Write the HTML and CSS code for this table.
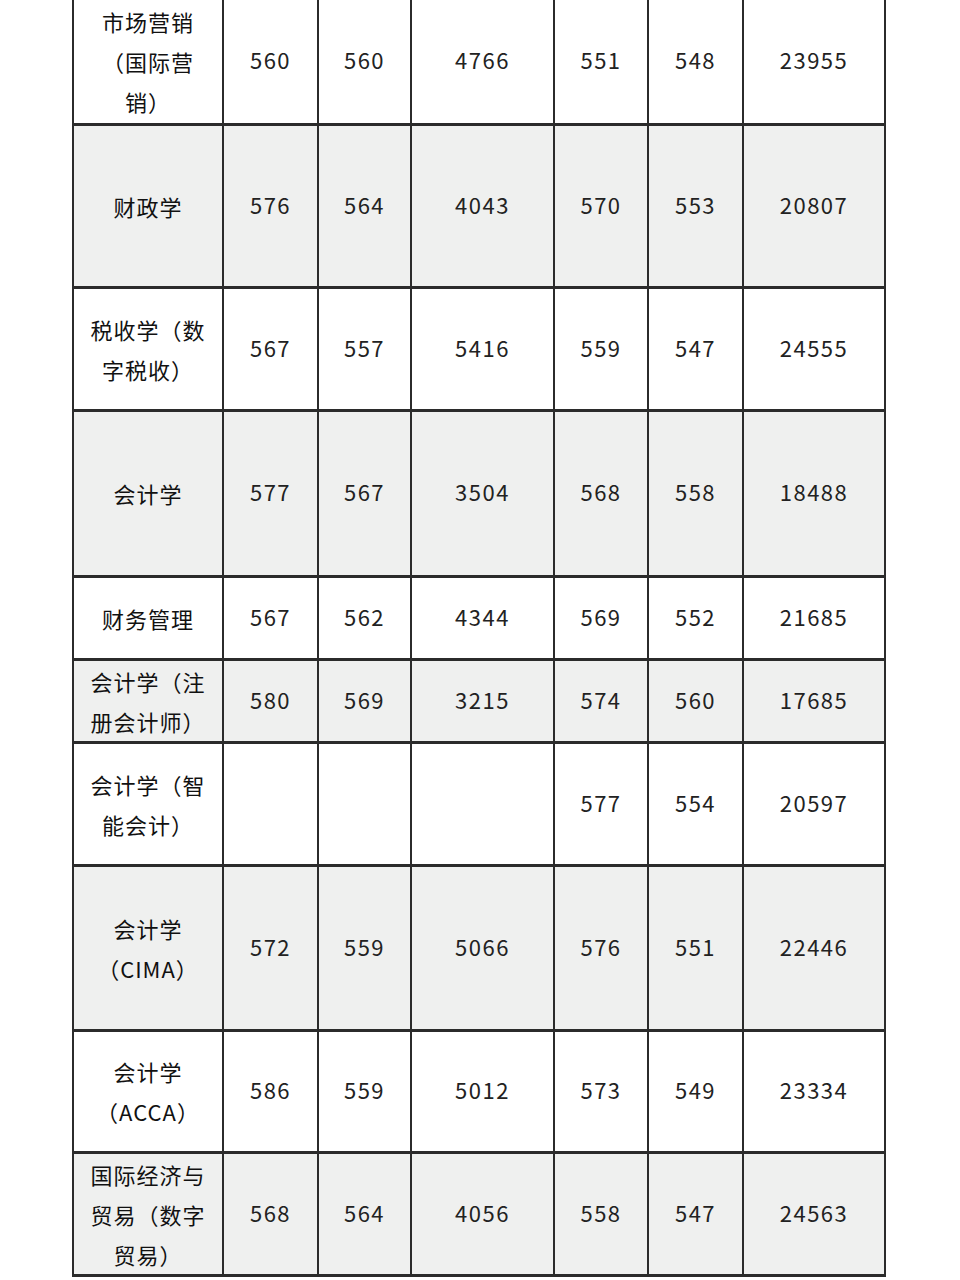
FILE: index.html
```html
<!DOCTYPE html>
<html lang="zh-CN">
<head>
<meta charset="utf-8">
<link rel="stylesheet" href="styles.css">
</head>
<body>
<table class="scores">
  <colgroup>
    <col class="c-name"><col class="c-a"><col class="c-b"><col class="c-c"><col class="c-d"><col class="c-e"><col class="c-f">
  </colgroup>
  <tbody>
    <tr class="r1"><td class="name">市场营销（国际营销）</td><td>560</td><td>560</td><td>4766</td><td>551</td><td>548</td><td>23955</td></tr>
    <tr class="r2 shade"><td class="name">财政学</td><td>576</td><td>564</td><td>4043</td><td>570</td><td>553</td><td>20807</td></tr>
    <tr class="r3"><td class="name">税收学（数字税收）</td><td>567</td><td>557</td><td>5416</td><td>559</td><td>547</td><td>24555</td></tr>
    <tr class="r4 shade"><td class="name">会计学</td><td>577</td><td>567</td><td>3504</td><td>568</td><td>558</td><td>18488</td></tr>
    <tr class="r5"><td class="name">财务管理</td><td>567</td><td>562</td><td>4344</td><td>569</td><td>552</td><td>21685</td></tr>
    <tr class="r6 shade"><td class="name">会计学（注册会计师）</td><td>580</td><td>569</td><td>3215</td><td>574</td><td>560</td><td>17685</td></tr>
    <tr class="r7"><td class="name">会计学（智能会计）</td><td></td><td></td><td></td><td>577</td><td>554</td><td>20597</td></tr>
    <tr class="r8 shade"><td class="name">会计学（CIMA）</td><td>572</td><td>559</td><td>5066</td><td>576</td><td>551</td><td>22446</td></tr>
    <tr class="r9"><td class="name">会计学（ACCA）</td><td>586</td><td>559</td><td>5012</td><td>573</td><td>549</td><td>23334</td></tr>
    <tr class="r10 shade"><td class="name">国际经济与贸易（数字贸易）</td><td>568</td><td>564</td><td>4056</td><td>558</td><td>547</td><td>24563</td></tr>
  </tbody>
</table>
</body>
</html>
```
FILE: styles.css
```css
html, body {
  margin: 0;
  padding: 0;
  background: #ffffff;
}
body {
  font-family: "Noto Sans CJK SC", "Noto Sans", sans-serif;
  color: #222;
}
.scores {
  margin-left: 72px;
  width: 812px;
  table-layout: fixed;
  border-collapse: collapse;
  font-size: 22px;
  text-spacing-trim: space-all;
}
.c-name { width: 150px; }
.c-a { width: 95px; }
.c-b { width: 93px; }
.c-c { width: 143px; }
.c-d { width: 94px; }
.c-e { width: 95px; }
.c-f { width: 142px; }

.scores td {
  border: 3px solid #2b2b2b;
  border-left-width: 2px;
  border-right-width: 2px;
  text-align: center;
  vertical-align: middle;
  padding: 0 10px 4px;
  letter-spacing: 1.5px;
  line-height: 40px;
  color: #222;
}
.scores tr.r1 td { border-top: none; }
.scores td.name {
  color: #111;
  letter-spacing: 1px;
  padding: 0 11px;
}
.shade td { background: #eff0ef; }

.r1 { height: 124px; }
.r2 { height: 163px; }
.r3 { height: 123px; }
.r4 { height: 166px; }
.r5 { height: 83px; }
.r6 { height: 83px; }
.r7 { height: 123px; }
.r8 { height: 165px; }
.r9 { height: 122px; }
.r10 { height: 123px; }
```
